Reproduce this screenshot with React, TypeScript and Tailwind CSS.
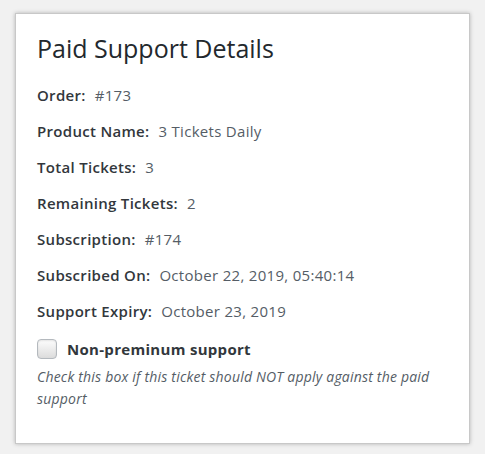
const rows = [
  { label: "Order:", value: "#173" },
  { label: "Product Name:", value: "3 Tickets Daily" },
  { label: "Total Tickets:", value: "3" },
  { label: "Remaining Tickets:", value: "2" },
  { label: "Subscription:", value: "#174" },
  { label: "Subscribed On:", value: "October 22, 2019, 05:40:14" },
  { label: "Support Expiry:", value: "October 23, 2019" },
];

export default function App() {
  return (
    <div
      className="min-h-[454px] w-[485px] bg-[#f1f1f1] pt-[13px] pl-[15px]"
      style={{ fontFamily: '"Open Sans", "Noto Sans", sans-serif' }}
    >
      <div className="w-[455px] h-[431px] bg-white border border-[#c8c8c8] shadow-[0_0_4px_rgba(0,0,0,0.25)] pl-[21px] pr-4 pt-[18px]">
        <h2 className="text-[25px] leading-[32px] text-[#23282d]">
          Paid Support Details
        </h2>
        <div className="mt-[21px] flex flex-col">
          {rows.map((r) => (
            <div key={r.label} className="h-[36px] flex items-start text-[15px] leading-[20px] tracking-[0.3px]">
              <span className="font-semibold text-[#32373c]">{r.label}</span>
              <span className="ml-[9px] text-[#555d66]">{r.value}</span>
            </div>
          ))}
        </div>
        <label className="flex items-center gap-[10px] mt-[1px]">
          <span className="w-[20px] h-[20px] rounded-[4px] border border-[#b4b9be] bg-gradient-to-b from-[#fdfdfd] to-[#dcdcdc] shadow-[inset_0_1px_2px_rgba(0,0,0,0.1)]" />
          <span className="font-bold text-[15px] text-[#32373c] tracking-[0.3px]">Non-preminum support</span>
        </label>
        <p className="mt-[5px] w-[400px] text-[14px] leading-[22px] italic text-[#555d66] tracking-[0.2px]">
          Check this box if this ticket should NOT apply against the paid support
        </p>
      </div>
    </div>
  );
}
